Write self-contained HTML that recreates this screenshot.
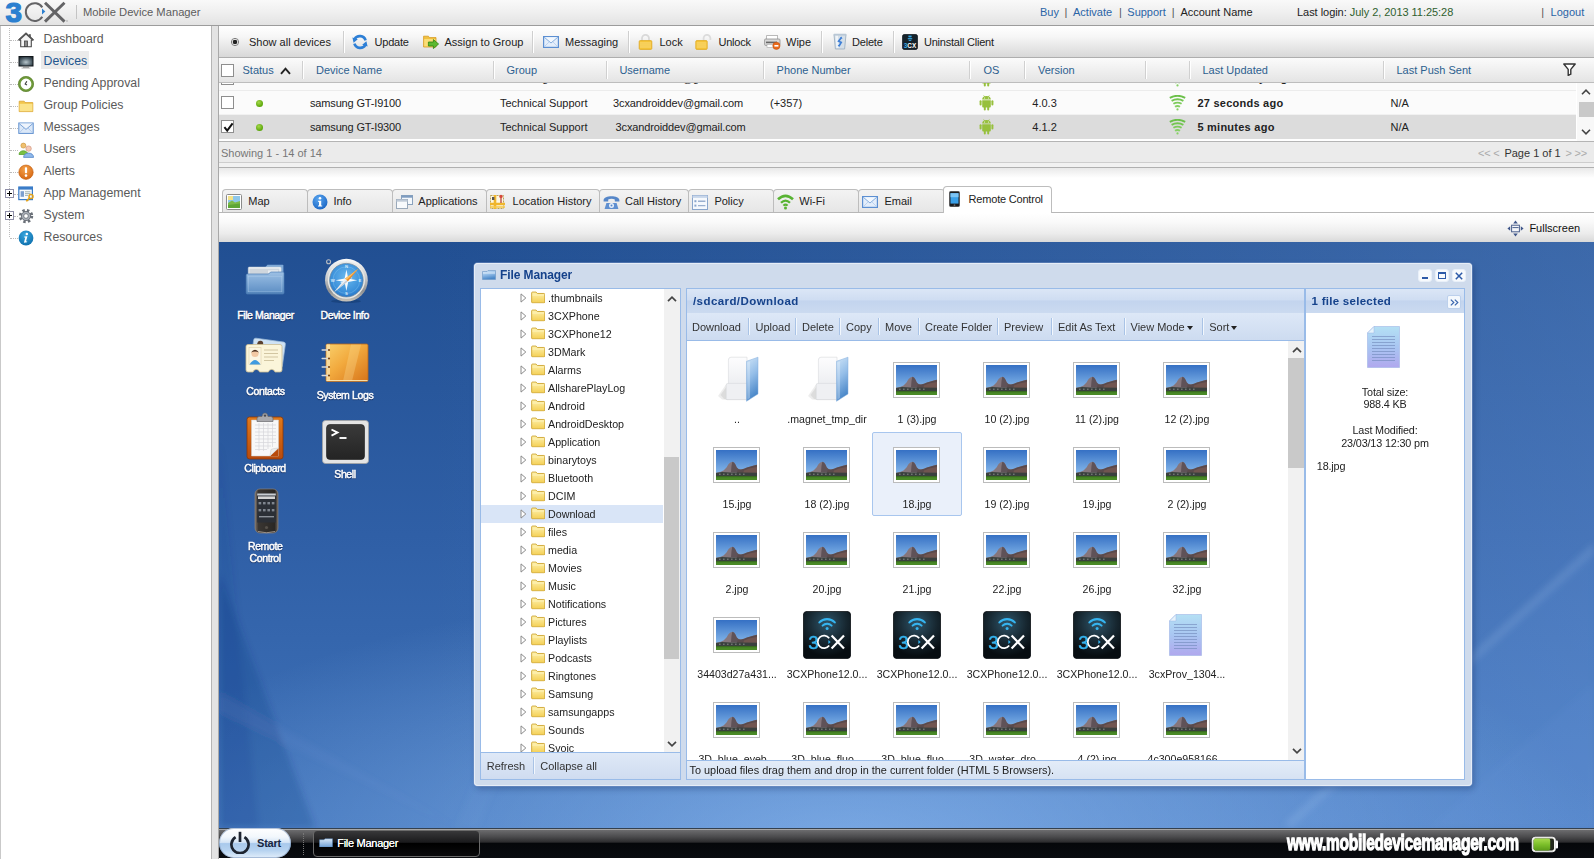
<!DOCTYPE html>
<html>
<head>
<meta charset="utf-8">
<title>3CX Mobile Device Manager</title>
<style>
*{box-sizing:border-box;margin:0;padding:0}
html,body{width:1594px;height:859px;overflow:hidden;background:#fff}
body{font-family:"Liberation Sans",sans-serif;font-size:11px;color:#222;position:relative}
.abs{position:absolute}
.t{position:absolute;white-space:nowrap;line-height:14px}
/* header */
#hdr{position:absolute;left:0;top:0;width:1594px;height:26px;background:linear-gradient(#f9f9f9,#efefef 50%,#e3e3e3);border-bottom:1px solid #9c9c9c}
#hdr .lnk{color:#2a64a6}
/* sidebar */
#side{position:absolute;left:0;top:26px;width:212px;height:833px;background:#fff;border-left:1px solid #c9c9c9;border-right:1px solid #b5b5b5}
#split{position:absolute;left:212px;top:26px;width:6px;height:833px;background:#e3e3e3}
.nav{position:absolute;left:42.5px;margin-top:-1px;font-size:12.3px;color:#5a5a5a;line-height:16px;white-space:nowrap}
.nico{position:absolute;left:17px;width:18px;height:18px}
/* main */
#main{position:absolute;left:218px;top:26px;width:1376px;height:833px;border-left:1px solid #a9a9a9}
#tb{position:absolute;left:0;top:0px;width:1375px;height:32px;background:linear-gradient(#ffffff 0%,#f6f6f6 35%,#e6e6e6 70%,#d8d8d8 100%);border-bottom:1px solid #aeaeae}
#tb .t{top:9px;font-size:11px;color:#222;letter-spacing:0}
.sep{position:absolute;top:5px;width:1px;height:22px;background:#cfcfcf;border-right:1px solid #fff;box-sizing:content-box}
#gh{position:absolute;left:0;top:32px;width:1375px;height:25px;background:linear-gradient(#fbfbfb,#e4e4e4);border-bottom:1px solid #bdbdbd}
#gh .t{top:5px;color:#2d5f8f;font-size:11px;letter-spacing:0}
#gh .cs{position:absolute;top:3px;width:1px;height:18px;background:#d0d0d0;border-right:1px solid #fff;box-sizing:content-box}
.row{position:absolute;left:0;width:1357px;font-size:11px}
.row .t{top:5px;letter-spacing:0;color:#222}
.cb{position:absolute;width:13px;height:13px;background:#fff;border:1px solid #8e8e8e}
.dot{position:absolute;width:7px;height:7px;border-radius:50%;background:radial-gradient(circle at 40% 35%,#a5d84a,#5aa60a 70%)}
/* tabs */
.tab{position:absolute;top:163px;height:23px;border:1px solid #bdbdbd;border-bottom:none;border-radius:4px 4px 0 0;background:linear-gradient(#f3f3f3,#e6e6e6)}
.tab .t{top:4px;font-size:11px;color:#222;letter-spacing:0}
.tab.act{top:159.6px;height:27.4px;background:#fff;z-index:3}
.tab.act .t{top:5px;letter-spacing:-.2px}
/* desktop */
#desk{position:absolute;left:0px;top:216px;width:1375px;height:586px;overflow:hidden;background:linear-gradient(180deg,#2b5aa3 0%,#3466ae 25%,#416fb5 50%,#4a7cc2 75%,#5a8fd4 100%)}
#task{position:absolute;left:0;top:802px;width:1375px;height:30px;background:linear-gradient(#777779 0%,#6a6a6c 8%,#4a4a4c 30%,#2c2c2e 47%,#05070a 51%,#0a0c10 100%)}
.dlab{position:absolute;color:#fff;-webkit-text-stroke:.45px #fff;font-size:10.5px;text-align:center;line-height:12px;text-shadow:0 1px 1px rgba(0,0,30,.7);letter-spacing:-.38px;white-space:nowrap}
</style>
</head>
<body>
<div id="hdr">
 <!-- logo -->
 <svg class="abs" style="left:0px;top:0px" width="72" height="25" viewBox="0 0 72 25">
  <text x="5.6" y="21.8" font-family="Liberation Sans" font-weight="bold" font-size="27.5" fill="#2b7fd0" stroke="#2b7fd0" stroke-width="1.1" textLength="16.5" lengthAdjust="spacingAndGlyphs">3</text>
  <path d="M42.3 7.4 A8.9 8.9 0 1 0 42.3 16.8" fill="none" stroke="#646466" stroke-width="2"/>
  <path d="M42 8.4 L45.3 11.4 L42 14.4 Z" fill="#2b7fd0"/>
  <path d="M45 2.8 L64.5 21.6 M64.5 2.8 L45 21.6" stroke="#646466" stroke-width="2.9" fill="none"/>
  <circle cx="67" cy="21" r="0.7" fill="#999"/>
 </svg>
 <div class="abs" style="left:76px;top:5px;width:1px;height:14px;background:#c4c4c4"></div>
 <div class="t" style="left:83px;top:5px;font-size:11.2px;color:#5c5c5c;">Mobile Device Manager</div>
 <div class="t lnk" style="left:1040px;top:5px">Buy</div><div class="t" style="left:1064.5px;top:5px;color:#555">|</div><div class="t lnk" style="left:1073px;top:5px">Activate</div><div class="t" style="left:1119px;top:5px;color:#555">|</div><div class="t lnk" style="left:1127.3px;top:5px">Support</div><div class="t" style="left:1171.8px;top:5px;color:#555">|</div><div class="t" style="left:1180.4px;top:5px;color:#222">Account Name</div>
 <div class="t" style="left:1297px;top:5px;font-size:11px;color:#222;letter-spacing:-.04px">Last login: <span style="color:#2f5f2f">July 2, 2013 11:25:28</span></div>
 <div class="t" style="left:1541.2px;top:5px;color:#555">|</div><div class="t lnk" style="left:1550.6px;top:5px">Logout</div>
</div>

<div id="side">
<div class="abs" style="left:8px;top:2px;width:0;height:209px;border-left:1px dotted #bcbcbc"></div>
<div class="abs" style="left:9px;top:14px;width:8px;height:0;border-top:1px dotted #bcbcbc"></div>
<div class="nico" style="left:17px;top:6px"><svg viewBox="0 0 16 16" width="16" height="16"><path d="M8 1.2 L15.3 8 L13.3 8 L13.3 14.8 L2.7 14.8 L2.7 8 L0.7 8 Z" fill="#f4f4f4" stroke="#4a4a4a" stroke-width="1.1" stroke-linejoin="round"/><path d="M0.9 8.2 L8 1.6 L15.1 8.2" fill="none" stroke="#555" stroke-width="1.6"/><rect x="11" y="2.2" width="1.8" height="3" fill="#555"/><rect x="6.5" y="9" width="3" height="5.6" fill="#8a8a8a" stroke="#444" stroke-width=".8"/></svg></div>
<div class="nav" style="top:6px">Dashboard</div>
<div class="abs" style="left:9px;top:36px;width:8px;height:0;border-top:1px dotted #bcbcbc"></div>
<div class="nico" style="left:17px;top:28px"><svg viewBox="0 0 16 16" width="16" height="16"><defs><radialGradient id="dv" cx=".5" cy=".6" r=".7"><stop offset="0" stop-color="#b8c6cc"/><stop offset=".6" stop-color="#4d5d66"/><stop offset="1" stop-color="#1a2228"/></radialGradient></defs><rect x="1" y="2.5" width="14" height="9.5" fill="url(#dv)" stroke="#11171b" stroke-width="1"/><rect x="5" y="12.5" width="6" height="1.2" fill="#777"/><rect x="3.5" y="13.6" width="9" height=".9" fill="#aaa"/></svg></div>
<div class="abs" style="left:40px;top:25px;width:48px;height:18px;background:#ebebeb"></div>
<div class="nav" style="top:28px;color:#24578f">Devices</div>
<div class="abs" style="left:9px;top:58px;width:8px;height:0;border-top:1px dotted #bcbcbc"></div>
<div class="nico" style="left:17px;top:50px"><svg viewBox="0 0 16 16" width="16" height="16"><circle cx="8" cy="8" r="6.6" fill="#fff" stroke="#6f9a3a" stroke-width="2.4"/><circle cx="8" cy="8" r="7.6" fill="none" stroke="#557a2a" stroke-width=".6"/><path d="M8.8 5.2 L7.2 8 L9 9" fill="none" stroke="#444" stroke-width="1.2"/></svg></div>
<div class="nav" style="top:50px">Pending Approval</div>
<div class="abs" style="left:9px;top:80px;width:8px;height:0;border-top:1px dotted #bcbcbc"></div>
<div class="nico" style="left:17px;top:72px"><svg viewBox="0 0 16 16" width="16" height="16"><path d="M1.2 3.2 L6.2 3.2 L7 4.6 L14.8 4.6 L14.8 13.6 L1.2 13.6 Z" fill="#f3c64c" stroke="#d9a32e" stroke-width=".8"/><rect x="1.6" y="5.8" width="12.8" height="7.4" fill="#fbe38a"/></svg></div>
<div class="nav" style="top:72px">Group Policies</div>
<div class="abs" style="left:9px;top:102px;width:8px;height:0;border-top:1px dotted #bcbcbc"></div>
<div class="nico" style="left:17px;top:94px"><svg viewBox="0 0 16 16" width="16" height="16"><rect x=".8" y="3" width="14.4" height="10.4" fill="#dbe8f8" stroke="#5f8fcf" stroke-width="1"/><path d="M1.2 3.6 L8 9.4 L14.8 3.6" fill="#eef4fc" stroke="#7aa3d8" stroke-width="1"/><path d="M1.2 13 L6 8 M14.8 13 L10 8" stroke="#a9c4e8" stroke-width=".8"/></svg></div>
<div class="nav" style="top:94px">Messages</div>
<div class="abs" style="left:9px;top:124px;width:8px;height:0;border-top:1px dotted #bcbcbc"></div>
<div class="nico" style="left:17px;top:116px"><svg viewBox="0 0 16 16" width="16" height="16"><circle cx="5.4" cy="3.6" r="2.5" fill="#f0c070" stroke="#c89030" stroke-width=".6"/><path d="M1 12.5 C1 7.5 9.8 7.5 9.8 12.5 Z" fill="#7bc043" stroke="#4e9a22" stroke-width=".7"/><circle cx="10.6" cy="6.6" r="2.7" fill="#f6c9b4" stroke="#c98a70" stroke-width=".6"/><path d="M5.6 15.4 C5.6 9.6 15.6 9.6 15.6 15.4 Z" fill="#8fb8ea" stroke="#4a7fc4" stroke-width=".7"/></svg></div>
<div class="nav" style="top:116px">Users</div>
<div class="abs" style="left:9px;top:146px;width:8px;height:0;border-top:1px dotted #bcbcbc"></div>
<div class="nico" style="left:17px;top:138px"><svg viewBox="0 0 16 16" width="16" height="16"><defs><radialGradient id="al" cx=".45" cy=".3" r=".8"><stop offset="0" stop-color="#f5a24a"/><stop offset="1" stop-color="#d2600c"/></radialGradient></defs><circle cx="8" cy="8.2" r="7.2" fill="url(#al)" stroke="#c05a0a" stroke-width=".6"/><rect x="6.9" y="3.2" width="2.2" height="6" rx=".8" fill="#fff"/><circle cx="8" cy="11.6" r="1.3" fill="#fff"/></svg></div>
<div class="nav" style="top:138px">Alerts</div>
<div class="abs" style="left:4px;top:163px;width:9px;height:9px;border:1px solid #8f8fa8;background:#fff"></div><div class="abs" style="left:6px;top:167px;width:5px;height:1px;background:#000"></div><div class="abs" style="left:8px;top:165px;width:1px;height:5px;background:#000"></div>
<div class="abs" style="left:13px;top:168px;width:4px;height:0;border-top:1px dotted #bcbcbc"></div>
<div class="nico" style="left:17px;top:160px"><svg viewBox="0 0 16 16" width="16" height="16"><rect x=".8" y="1" width="13.6" height="12.6" fill="#f7fafd" stroke="#3a7cc8" stroke-width="1.2"/><rect x=".8" y="1" width="13.6" height="2.6" fill="#3a7cc8"/><rect x="2.6" y="5.2" width="3.4" height="5.6" fill="#7c9fd0"/><path d="M7 5.8 H12.4 M7 7.6 H12.4 M7 9.4 H10" stroke="#9aa" stroke-width=".9"/><circle cx="13" cy="10.4" r="2" fill="none" stroke="#e3a21a" stroke-width="1.5"/><path d="M11.6 11.8 L8.2 15.2 M9.3 14 L10.3 15" stroke="#e3a21a" stroke-width="1.5"/></svg></div>
<div class="nav" style="top:160px">App Management</div>
<div class="abs" style="left:4px;top:185px;width:9px;height:9px;border:1px solid #8f8fa8;background:#fff"></div><div class="abs" style="left:6px;top:189px;width:5px;height:1px;background:#000"></div><div class="abs" style="left:8px;top:187px;width:1px;height:5px;background:#000"></div>
<div class="abs" style="left:13px;top:190px;width:4px;height:0;border-top:1px dotted #bcbcbc"></div>
<div class="nico" style="left:17px;top:182px"><svg viewBox="0 0 16 16" width="16" height="16"><g fill="none" stroke="#6a7078" stroke-width="2.8" stroke-dasharray="2.4 2.2"><circle cx="8" cy="8" r="5.8"/></g><circle cx="8" cy="8" r="4.6" fill="#aab0b8" stroke="#5a6068" stroke-width=".8"/><circle cx="8" cy="8" r="2.3" fill="#fff" stroke="#5a6068" stroke-width=".7"/></svg></div>
<div class="nav" style="top:182px">System</div>
<div class="abs" style="left:9px;top:212px;width:8px;height:0;border-top:1px dotted #bcbcbc"></div>
<div class="nico" style="left:17px;top:204px"><svg viewBox="0 0 16 16" width="16" height="16"><defs><radialGradient id="rs" cx=".45" cy=".3" r=".8"><stop offset="0" stop-color="#37a6de"/><stop offset="1" stop-color="#0a6aa8"/></radialGradient></defs><circle cx="8" cy="8" r="7.4" fill="url(#rs)"/><circle cx="8.8" cy="4" r="1.25" fill="#fff"/><path d="M6.3 6.6 L9.4 6.2 L8 11.6 L9.2 11.3 L9 12.2 L5.9 12.8 L7.3 7.4 L6.2 7.5 Z" fill="#fff"/></svg></div>
<div class="nav" style="top:204px">Resources</div>
</div>
<div id="split"></div>
<div id="main">
<div id="tb">
<div class="abs" style="left:11px;top:11px;line-height:0"><svg width="10" height="10" viewBox="0 0 10 10"><circle cx="5" cy="5" r="3.6" fill="#fff" stroke="#777" stroke-width="1"/><circle cx="5" cy="5" r="2.3" fill="#222"/></svg></div>
<div class="t" style="left:30px;">Show all devices</div>
<div class="sep" style="left:124px"></div>
<div class="abs" style="left:133px;top:8px;line-height:0"><svg width="16" height="16" viewBox="0 0 16 16"><path d="M13.6 6.4 A6 6 0 0 0 2.6 5.2" fill="none" stroke="#2d7fd6" stroke-width="2.6"/><path d="M0.4 3.6 L5.8 5.2 L1.6 8.8 Z" fill="#2d7fd6"/><path d="M2.4 9.6 A6 6 0 0 0 13.4 10.8" fill="none" stroke="#2d7fd6" stroke-width="2.6"/><path d="M15.6 12.4 L10.2 10.8 L14.4 7.2 Z" fill="#2d7fd6"/></svg></div>
<div class="t" style="left:155.5px;;letter-spacing:-0.2px">Update</div>
<div class="abs" style="left:204px;top:8px;line-height:0"><svg width="16" height="16" viewBox="0 0 16 16"><path d="M.6 2.2 L5.4 2.2 L6.4 3.6 L13 3.6 L13 13 L.6 13 Z" fill="#f2c140" stroke="#d49a22" stroke-width=".8"/><rect x="1.2" y="5" width="11.2" height="7.4" fill="#fadd77"/><path d="M5.4 8 L10.4 8 L10.4 5.6 L15.6 10 L10.4 14.6 L10.4 12 L5.4 12 Z" fill="#5cb830" stroke="#2f8412" stroke-width=".8"/></svg></div>
<div class="t" style="left:225.5px;">Assign to Group</div>
<div class="sep" style="left:313px"></div>
<div class="abs" style="left:324px;top:10px;line-height:0"><svg width="16" height="12" viewBox="0 0 16 12"><rect x=".6" y=".6" width="14.8" height="10.8" fill="#e4eefb" stroke="#5c8fd2" stroke-width="1.2"/><path d="M1.2 1.2 L8 7 L14.8 1.2" fill="#f3f8fe" stroke="#86aede" stroke-width="1"/><path d="M1.2 10.8 L6 6 M14.8 10.8 L10 6" stroke="#b4cdee" stroke-width=".8"/></svg></div>
<div class="t" style="left:346px;">Messaging</div>
<div class="sep" style="left:409px"></div>
<div class="abs" style="left:419px;top:8px;line-height:0"><svg width="15" height="16" viewBox="0 0 15 16"><path d="M4 7 V4.4 A3.5 3.5 0 0 1 11 4.4 V7" fill="none" stroke="#d9d9d9" stroke-width="1.8"/><rect x="1.2" y="6.6" width="12.6" height="8.8" rx="1" fill="#f6c53a" stroke="#e0a820" stroke-width=".8"/><path d="M2 9 H13 M2 11 H13 M2 13 H13" stroke="#fbe08a" stroke-width=".8"/></svg></div>
<div class="t" style="left:440.5px;">Lock</div>
<div class="abs" style="left:476px;top:8px;line-height:0"><svg width="17" height="16" viewBox="0 0 17 16"><path d="M8.6 7 V4.2 A3.4 3.4 0 0 1 15.4 4.2 V6" fill="none" stroke="#dcdcdc" stroke-width="1.8"/><rect x=".8" y="6.6" width="11.4" height="8.8" rx="1" fill="#f6c53a" stroke="#e0a820" stroke-width=".8"/><path d="M1.6 9 H11.4 M1.6 11 H11.4 M1.6 13 H11.4" stroke="#fbe08a" stroke-width=".8"/></svg></div>
<div class="t" style="left:499.4px;;letter-spacing:-0.2px">Unlock</div>
<div class="abs" style="left:545px;top:8px;line-height:0"><svg width="17" height="16" viewBox="0 0 17 16"><rect x="2.6" y="1.6" width="11" height="4" fill="#fff" stroke="#aaa" stroke-width=".8"/><rect x=".6" y="5" width="15.4" height="6.4" rx="1" fill="#d8d8d8" stroke="#8f8f8f" stroke-width=".8"/><rect x="2" y="7.6" width="11" height="1.6" fill="#666"/><rect x="3" y="10.4" width="9" height="3" fill="#fff" stroke="#aaa" stroke-width=".6"/><circle cx="12.4" cy="11.8" r="3.6" fill="#ea6a1c" stroke="#c4500c" stroke-width=".6"/><rect x="10.4" y="11" width="4" height="1.6" fill="#fff"/></svg></div>
<div class="t" style="left:567px;">Wipe</div>
<div class="sep" style="left:602px"></div>
<div class="abs" style="left:613px;top:7px;line-height:0"><svg width="16" height="17" viewBox="0 0 16 17"><path d="M2 1.6 H14 L12.6 16 H3.4 Z" fill="#d5dfe8" stroke="#9fb1c2" stroke-width=".9"/><path d="M3.4 2.4 H6 L6.6 15 H4.4 Z" fill="#f2f6fa" opacity=".9"/><rect x="1.6" y=".8" width="12.8" height="1.8" rx=".6" fill="#b9c8d6"/><path d="M9.4 4.6 L6.6 8.2 L9.2 9.4 L7 13" fill="none" stroke="#3f7fd6" stroke-width="1.7"/><path d="M10.6 5.4 L9.2 3.6 L8 5.6 Z M5.6 12.2 L7.2 14 L8.2 11.8 Z" fill="#3f7fd6"/></svg></div>
<div class="t" style="left:633px;;letter-spacing:-0.2px">Delete</div>
<div class="sep" style="left:674px"></div>
<div class="abs" style="left:683px;top:8px;line-height:0"><svg width="16" height="16" viewBox="0 0 16 16"><rect x=".3" y=".3" width="15.4" height="15.4" rx="2.6" fill="#15222b" stroke="#0a1218" stroke-width=".6"/><path d="M5.8 5.2 A3.4 3.4 0 0 1 10.2 5.2 M6.8 6.6 A1.8 1.8 0 0 1 9.2 6.6" fill="none" stroke="#35a9e6" stroke-width="1.1"/><circle cx="8" cy="3" r=".01" fill="none"/><text x="8" y="13.6" text-anchor="middle" font-family="Liberation Sans" font-size="6.4" font-weight="bold" fill="#fff"><tspan fill="#35a9e6">3</tspan>CX</text><rect x="6.4" y="1.6" width="3.2" height="1.6" fill="#35a9e6"/></svg></div>
<div class="t" style="left:705px;;letter-spacing:-0.22px">Uninstall Client</div>
</div>
<div id="gh">
<div class="cb" style="left:2px;top:6px"></div>
<div class="t" style="left:23.5px;">Status</div>
<div class="t" style="left:97px;">Device Name</div>
<div class="t" style="left:287.5px;">Group</div>
<div class="t" style="left:400.4px;">Username</div>
<div class="t" style="left:557.6px;">Phone Number</div>
<div class="t" style="left:764.4px;">OS</div>
<div class="t" style="left:819px;">Version</div>
<div class="t" style="left:983.5px;">Last Updated</div>
<div class="t" style="left:1177.5px;">Last Push Sent</div>
<svg class="abs" style="left:60.5px;top:9px" width="11" height="8" viewBox="0 0 11 8"><path d="M1 6.8 L5.5 1.6 L10 6.8" fill="none" stroke="#222" stroke-width="1.9"/></svg>
<div class="cs" style="left:83px"></div>
<div class="cs" style="left:273.5px"></div>
<div class="cs" style="left:387px"></div>
<div class="cs" style="left:544px"></div>
<div class="cs" style="left:750px"></div>
<div class="cs" style="left:805px"></div>
<div class="cs" style="left:925.5px"></div>
<div class="cs" style="left:969.5px"></div>
<div class="cs" style="left:1163.5px"></div>
<div class="abs" style="left:1343.5px;top:5px;line-height:0"><svg width="13" height="13" viewBox="0 0 13 13"><path d="M.8 1 H12.2 L7.8 6.4 V11.2 L5.2 12.4 V6.4 Z" fill="#fff" stroke="#333" stroke-width="1.4" stroke-linejoin="round"/></svg></div>
</div>
<div class="abs" style="left:0;top:57px;width:1375px;height:58px;background:#fff;overflow:hidden">
<div class="row" style="top:0;height:8px;background:#fafafa;border-bottom:1px solid #ececec;overflow:hidden">
<div class="cb" style="left:2px;top:-11px"></div>
<div class="t" style="left:91px;top:-13px">HTC Desire HD</div><div class="t" style="left:281px;top:-12px">Marketing</div><div class="t" style="left:394px;top:-12px;margin-left:9px">3cxandroid2@gmail.com</div><div class="t" style="left:978px;top:-12px;font-weight:bold;margin-left:40px">2 days ago</div>
<div class="abs" style="left:760px;top:-12px;line-height:0"><svg width="15" height="16" viewBox="0 0 15 16"><g fill="#97c03d"><path d="M3.2 5.2 H11.8 V11.6 A1 1 0 0 1 10.8 12.6 H4.2 A1 1 0 0 1 3.2 11.6 Z"/><path d="M3.2 4.6 A4.3 3.7 0 0 1 11.8 4.6 Z"/><rect x=".6" y="5.2" width="2" height="5.4" rx="1"/><rect x="12.4" y="5.2" width="2" height="5.4" rx="1"/><rect x="4.8" y="11" width="2" height="4.6" rx="1"/><rect x="8.2" y="11" width="2" height="4.6" rx="1"/><path d="M4.6 .4 L5.8 2 M10.4 .4 L9.2 2" stroke="#97c03d" stroke-width=".7"/></g><circle cx="5.6" cy="3" r=".55" fill="#fff"/><circle cx="9.4" cy="3" r=".55" fill="#fff"/></svg></div><div class="abs" style="left:949.5px;top:-12.5px;line-height:0"><svg width="17" height="16" viewBox="0 0 17 16"><g fill="none" stroke-linecap="butt"><path d="M.8 2.8 Q8.5 -1.2 16.2 2.8" stroke="#6cc04a" stroke-width="1.9"/><path d="M2.6 5.8 Q8.5 2.6 14.4 5.8" stroke="#74c652" stroke-width="1.9"/><path d="M4.4 8.8 Q8.5 6.4 12.6 8.8" stroke="#7dcb5b" stroke-width="1.9"/><path d="M6 11.8 Q8.5 10.2 11 11.8" stroke="#86d064" stroke-width="1.9"/></g><circle cx="8.5" cy="14.4" r="1.1" fill="#86d064"/></svg></div>
</div>
<div class="row" style="top:8px;height:24px;background:#fbfbfb;border-bottom:1px solid #f1f1f1"><div class="cb" style="left:2px;top:5px"></div><div class="dot" style="left:36.5px;top:8.5px"></div><div class="t" style="left:91px;;letter-spacing:-0.16px">samsung GT-I9100</div><div class="t" style="left:281px;">Technical Support</div><div class="t" style="left:394px;;letter-spacing:-0.12px">3cxandroiddev@gmail.com</div><div class="t" style="left:551px;">(+357)</div><div class="abs" style="left:760px;top:4px;line-height:0"><svg width="15" height="16" viewBox="0 0 15 16"><g fill="#97c03d"><path d="M3.2 5.2 H11.8 V11.6 A1 1 0 0 1 10.8 12.6 H4.2 A1 1 0 0 1 3.2 11.6 Z"/><path d="M3.2 4.6 A4.3 3.7 0 0 1 11.8 4.6 Z"/><rect x=".6" y="5.2" width="2" height="5.4" rx="1"/><rect x="12.4" y="5.2" width="2" height="5.4" rx="1"/><rect x="4.8" y="11" width="2" height="4.6" rx="1"/><rect x="8.2" y="11" width="2" height="4.6" rx="1"/><path d="M4.6 .4 L5.8 2 M10.4 .4 L9.2 2" stroke="#97c03d" stroke-width=".7"/></g><circle cx="5.6" cy="3" r=".55" fill="#fff"/><circle cx="9.4" cy="3" r=".55" fill="#fff"/></svg></div><div class="t" style="left:813.3px;">4.0.3</div><div class="abs" style="left:949.5px;top:4px;line-height:0"><svg width="17" height="16" viewBox="0 0 17 16"><g fill="none" stroke-linecap="butt"><path d="M.8 2.8 Q8.5 -1.2 16.2 2.8" stroke="#6cc04a" stroke-width="1.9"/><path d="M2.6 5.8 Q8.5 2.6 14.4 5.8" stroke="#74c652" stroke-width="1.9"/><path d="M4.4 8.8 Q8.5 6.4 12.6 8.8" stroke="#7dcb5b" stroke-width="1.9"/><path d="M6 11.8 Q8.5 10.2 11 11.8" stroke="#86d064" stroke-width="1.9"/></g><circle cx="8.5" cy="14.4" r="1.1" fill="#86d064"/></svg></div><div class="t" style="left:978.4px;font-weight:bold;letter-spacing:.25px">27 seconds ago</div><div class="t" style="left:1171.5px;">N/A</div></div>

<div class="row" style="top:32px;height:24px;background:#dcdcdc"><div class="cb" style="left:2px;top:5px"></div><svg class="abs" style="left:3.5px;top:6.5px" width="11" height="11" viewBox="0 0 11 11"><path d="M1.4 5.2 L4.2 8.6 L9.6 1.4" fill="none" stroke="#111" stroke-width="2"/></svg><div class="dot" style="left:36.5px;top:8.5px"></div><div class="t" style="left:91px;;letter-spacing:-0.16px">samsung GT-I9300</div><div class="t" style="left:281px;">Technical Support</div><div class="t" style="left:396.5px;;letter-spacing:-0.12px">3cxandroiddev@gmail.com</div><div class="abs" style="left:760px;top:4px;line-height:0"><svg width="15" height="16" viewBox="0 0 15 16"><g fill="#97c03d"><path d="M3.2 5.2 H11.8 V11.6 A1 1 0 0 1 10.8 12.6 H4.2 A1 1 0 0 1 3.2 11.6 Z"/><path d="M3.2 4.6 A4.3 3.7 0 0 1 11.8 4.6 Z"/><rect x=".6" y="5.2" width="2" height="5.4" rx="1"/><rect x="12.4" y="5.2" width="2" height="5.4" rx="1"/><rect x="4.8" y="11" width="2" height="4.6" rx="1"/><rect x="8.2" y="11" width="2" height="4.6" rx="1"/><path d="M4.6 .4 L5.8 2 M10.4 .4 L9.2 2" stroke="#97c03d" stroke-width=".7"/></g><circle cx="5.6" cy="3" r=".55" fill="#fff"/><circle cx="9.4" cy="3" r=".55" fill="#fff"/></svg></div><div class="t" style="left:813.3px;">4.1.2</div><div class="abs" style="left:949.5px;top:4px;line-height:0"><svg width="17" height="16" viewBox="0 0 17 16"><g fill="none" stroke-linecap="butt"><path d="M.8 2.8 Q8.5 -1.2 16.2 2.8" stroke="#6cc04a" stroke-width="1.9"/><path d="M2.6 5.8 Q8.5 2.6 14.4 5.8" stroke="#74c652" stroke-width="1.9"/><path d="M4.4 8.8 Q8.5 6.4 12.6 8.8" stroke="#7dcb5b" stroke-width="1.9"/><path d="M6 11.8 Q8.5 10.2 11 11.8" stroke="#86d064" stroke-width="1.9"/></g><circle cx="8.5" cy="14.4" r="1.1" fill="#86d064"/></svg></div><div class="t" style="left:978.4px;font-weight:bold;letter-spacing:.25px">5 minutes ago</div><div class="t" style="left:1171.5px;">N/A</div></div>
<div class="abs" style="left:1358px;top:0;width:17px;height:58px;background:#f8f8f8"></div>
<div class="abs" style="left:1360px;top:19px;width:15px;height:15px;background:#c9c9c9"></div>
<svg class="abs" style="left:1361.5px;top:6px" width="10" height="6" viewBox="0 0 10 6"><path d="M1 5.2 L5 1.2 L9 5.2" fill="none" stroke="#444" stroke-width="1.6"/></svg>
<svg class="abs" style="left:1361.5px;top:46px" width="10" height="6" viewBox="0 0 10 6"><path d="M1 .8 L5 4.8 L9 .8" fill="none" stroke="#444" stroke-width="1.6"/></svg>
</div>
<div class="abs" style="left:0;top:115px;width:1375px;height:22px;background:#ebebeb;border-top:1px solid #b4b4b4;border-bottom:1px solid #cdcdcd">
<div class="t" style="left:2px;top:4px;color:#777;font-size:11px">Showing 1 - 14 of 14</div>
<div class="t" style="left:1259px;top:4px;color:#aaa;font-size:11px;letter-spacing:-.2px">&lt;&lt; &lt;&nbsp;&thinsp;<span style="color:#333;letter-spacing:0">Page 1 of 1</span>&nbsp;&thinsp;&gt; &gt;&gt;</div>
</div>
<div class="abs" style="left:0;top:137px;width:1375px;height:4px;background:#f1f1f1"></div>
<div class="abs" style="left:0;top:141px;width:1375px;height:1px;background:#b0b0b0"></div>
<div class="abs" style="left:0;top:142px;width:1375px;height:10px;background:linear-gradient(#e9e9e9,#fff)"></div>
<div class="abs" style="left:0;top:152px;width:1375px;height:35px;background:#fff"></div>
<div class="abs" style="left:0;top:186px;width:1375px;height:1px;background:#b7b7b7"></div>
<div class="tab" style="left:3px;width:86px"><div class="abs" style="left:3px;top:4px;line-height:0"><svg width="16" height="16" viewBox="0 0 16 16"><rect x=".5" y=".5" width="15" height="15" rx="1" fill="#fff" stroke="#8a8a8a"/><rect x="2" y="2" width="12" height="12" fill="#8ec7ea"/><path d="M2 9 L6 6.5 L9 8.5 L14 7 V14 H2 Z" fill="#7cba48"/><rect x="2" y="2" width="5" height="4" fill="#f3e28a"/><path d="M2 11 L14 9.6 V14 H2 Z" fill="#5ea636"/></svg></div><div class="t" style="left:25.3px">Map</div></div>
<div class="tab" style="left:88px;width:86px"><div class="abs" style="left:4.3px;top:4px;line-height:0"><svg width="16" height="16" viewBox="0 0 16 16"><defs><radialGradient id="ig" cx=".4" cy=".3" r=".8"><stop offset="0" stop-color="#5aa6f0"/><stop offset="1" stop-color="#1560c0"/></radialGradient></defs><circle cx="8" cy="8" r="7.5" fill="url(#ig)"/><circle cx="8" cy="4.2" r="1.3" fill="#fff"/><path d="M6.2 6.8 H9.2 V11.4 H10.2 V12.6 H6 V11.4 H7 V8 H6.2 Z" fill="#fff"/></svg></div><div class="t" style="left:25.4px">Info</div></div>
<div class="tab" style="left:173px;width:95px"><div class="abs" style="left:3px;top:4px;line-height:0"><svg width="17" height="16" viewBox="0 0 17 16"><rect x="5.5" y="1.5" width="11" height="9" fill="#f4f8fc" stroke="#8aa2bd"/><rect x="5.5" y="1.5" width="11" height="2.2" fill="#7e9cc0"/><rect x=".5" y="5.5" width="11" height="9" fill="#f8fafc" stroke="#9aa9ba"/><rect x=".5" y="5.5" width="11" height="2.2" fill="#c0cbd8"/></svg></div><div class="t" style="left:25.3px">Applications</div></div>
<div class="tab" style="left:267px;width:114px"><div class="abs" style="left:2.4px;top:4px;line-height:0"><svg width="17" height="16" viewBox="0 0 17 16"><rect x="1.5" y="1.5" width="13" height="13" fill="#fdf7e2" stroke="#b9a25a" stroke-dasharray="2 1"/><path d="M1 10 H16 M6 1 V15" stroke="#f0b62c" stroke-width="2.6"/><path d="M1 13 H16" stroke="#f5c84e" stroke-width="1.6"/><path d="M12 1.4 V9" stroke="#b5342a" stroke-width="1.2"/><circle cx="12" cy="2.4" r="1.7" fill="#d6483a"/><rect x="3" y="3" width="2.4" height="3" fill="#555"/></svg></div><div class="t" style="left:25.6px">Location History</div></div>
<div class="tab" style="left:380px;width:90px"><div class="abs" style="left:2.7px;top:4px;line-height:0"><svg width="17" height="16" viewBox="0 0 17 16"><path d="M.6 6.4 C.6 1 16.4 1 16.4 6.4 V7.6 H11.8 V5.4 C10 4.6 7 4.6 5.2 5.4 V7.6 H.6 Z" fill="#5586c8"/><path d="M3.4 9 H13.6 L15.4 15 H1.6 Z" fill="#5f8fd0"/><circle cx="8.5" cy="11.6" r="2.5" fill="#e8f0fa"/><circle cx="8.5" cy="11.6" r="1" fill="#5586c8"/></svg></div><div class="t" style="left:25px">Call History</div></div>
<div class="tab" style="left:469px;width:86px"><div class="abs" style="left:3px;top:5px;line-height:0"><svg width="16" height="15" viewBox="0 0 16 15"><rect x=".5" y=".5" width="15" height="14" fill="#f6f9fd" stroke="#8aa6cc"/><rect x=".5" y=".5" width="15" height="2.4" fill="#c8d6ea"/><rect x="2.4" y="5.2" width="2" height="2" fill="#8aa6cc"/><rect x="2.4" y="9.6" width="2" height="2" fill="#8aa6cc"/><path d="M6 6.2 H13.4 M6 10.6 H13.4" stroke="#9ab0cf" stroke-width="1.4"/></svg></div><div class="t" style="left:25.4px">Policy</div></div>
<div class="tab" style="left:554px;width:86px"><div class="abs" style="left:3px;top:4px;line-height:0"><svg width="17" height="16" viewBox="0 0 17 16"><g fill="none" stroke="#58b332"><path d="M1 5.2 Q8.5 -1.6 16 5.2" stroke-width="2.6"/><path d="M4 8.8 Q8.5 4.4 13 8.8" stroke-width="2.3"/></g><path d="M6.4 11.6 Q8.5 9.6 10.6 11.6" fill="none" stroke="#58b332" stroke-width="2"/><circle cx="8.5" cy="14" r="1.5" fill="#58b332"/></svg></div><div class="t" style="left:25.3px">Wi-Fi</div></div>
<div class="tab" style="left:639px;width:86.7px"><div class="abs" style="left:3px;top:6px;line-height:0"><svg width="16" height="12" viewBox="0 0 16 12"><rect x=".6" y=".6" width="14.8" height="10.8" fill="#e4eefb" stroke="#5c8fd2" stroke-width="1.2"/><path d="M1.2 1.2 L8 7 L14.8 1.2" fill="#f3f8fe" stroke="#86aede" stroke-width="1"/><path d="M1.2 10.8 L6 6 M14.8 10.8 L10 6" stroke="#b4cdee" stroke-width=".8"/></svg></div><div class="t" style="left:25.4px">Email</div></div>
<div class="tab act" style="left:723.6px;width:109.2px"><div class="abs" style="left:5.5px;top:4.5px;line-height:0"><svg width="11" height="16" viewBox="0 0 11 16"><rect x=".3" y=".3" width="10.4" height="15.4" rx="1.6" fill="#1c1c1e" stroke="#555" stroke-width=".6"/><rect x="1.5" y="2.2" width="8" height="10.4" fill="#3aa0e8"/><rect x="1.5" y="2.2" width="8" height="4" fill="#7cc4f4"/><circle cx="5.5" cy="14.2" r=".9" fill="#666"/></svg></div><div class="t" style="left:25px">Remote Control</div></div>
<div class="abs" style="left:0;top:187px;width:1375px;height:29px;background:linear-gradient(#ffffff 0%,#fafafa 30%,#ececec 70%,#d9d9d9 100%)">
<svg class="abs" style="left:1288px;top:7px" width="17" height="17" viewBox="0 0 17 17"><rect x="4.6" y="5.2" width="7.8" height="6.6" fill="#f4f6fa" stroke="#4a5f8c" stroke-width="1"/><path d="M5.4 7.6 H11.6" stroke="#4a5f8c" stroke-width="1"/><path d="M8.5 .6 L10.8 3.6 H6.2 Z M8.5 16.4 L10.8 13.4 H6.2 Z M.4 8.5 L3.2 6.2 V10.8 Z M16.6 8.5 L13.8 6.2 V10.8 Z" fill="#3e568a"/></svg>
<div class="t" style="left:1310.4px;top:8px;font-size:11px;color:#111">Fullscreen</div>
</div>
<div id="desk"><svg class="abs" style="left:0;top:0" width="1375" height="586" viewBox="0 0 1375 586">
<defs>
<filter id="blr" x="-5%" y="-5%" width="110%" height="110%"><feGaussianBlur stdDeviation="3"/></filter>
<linearGradient id="bgA" x1="0" y1="0" x2="0" y2="1"><stop offset="0" stop-color="#214f92"/><stop offset=".5" stop-color="#2f5fa6"/><stop offset="1" stop-color="#4073ba"/></linearGradient>
<linearGradient id="bgB" x1="0" y1="0" x2="1" y2="0"><stop offset="0" stop-color="#9cc4ff" stop-opacity="0"/><stop offset=".15" stop-color="#9cc4ff" stop-opacity="0"/><stop offset="1" stop-color="#9cc4ff" stop-opacity=".22"/></linearGradient>
<radialGradient id="bgC" cx="0" cy="0" r="1" gradientUnits="userSpaceOnUse" gradientTransform="translate(631 600) scale(760 260)"><stop offset="0" stop-color="#a0ccff" stop-opacity=".56"/><stop offset=".5" stop-color="#a0ccff" stop-opacity=".29"/><stop offset="1" stop-color="#a0ccff" stop-opacity="0"/></radialGradient>
</defs>
<rect width="1375" height="586" fill="url(#bgA)"/>
<rect width="1375" height="586" fill="url(#bgB)"/>
<rect width="1375" height="586" fill="url(#bgC)"/>
<g filter="url(#blr)">
<path d="M1375 302 L1062 586 L1375 586 Z" fill="#8fbcf6" opacity=".05"/>
<path d="M1375 300 L1066 580 L1072 586 L1375 312 Z" fill="#c4ddfa" opacity=".12"/>
<path d="M1375 440 L1210 586 L1375 586 Z" fill="#8fbcf6" opacity=".04"/>
<path d="M0 330 L0 586 L96 586 Z" fill="#12357c" opacity=".22"/>
<path d="M0 200 L0 586 L40 586 Z" fill="#12357c" opacity=".10"/>
<path d="M240 586 L0 450 L0 470 Z" fill="#a8ccf6" opacity=".05"/>
<path d="M236 586 L400 180 L420 180 L260 586 Z" fill="#a8ccf6" opacity=".04"/>
</g>
</svg><svg class="abs" style="left:25px;top:20px" width="42" height="34" viewBox="0 0 42 34">
<defs><linearGradient id="ff" x1="0" y1="0" x2="0" y2="1"><stop offset="0" stop-color="#9dc0e4"/><stop offset=".5" stop-color="#7ba6d4"/><stop offset="1" stop-color="#5b8cc2"/></linearGradient></defs>
<path d="M21.5 5 L23.5 2.7 H38.6 Q39.4 2.7 39.4 3.6 V14 H21.5 Z" fill="#7fa9d6"/>
<rect x="4.2" y="5" width="33" height="9" rx="1" fill="#eef2f5" stroke="#b9c5d0" stroke-width=".5"/>
<rect x="5.4" y="6.6" width="30" height="6" fill="#cfd6dd"/>
<rect x="24" y="8.4" width="10" height="2.6" fill="#e9edf1"/>
<path d="M2.2 13.2 Q2.2 12 3.4 12 H24.6 L26.6 10 H38.8 Q40 10 40 11.2 V30.8 Q40 32 38.8 32 H3.4 Q2.2 32 2.2 30.8 Z" fill="url(#ff)" stroke="#4f7fb6" stroke-width=".7"/>
<rect x="4.4" y="14.2" width="33.4" height="15.6" fill="none" stroke="#c2daf2" stroke-width=".5" opacity=".55"/>
<path d="M2.6 31 H39.6" stroke="#3e6ca4" stroke-width=".8" opacity=".6"/>
</svg>
<svg class="abs" style="left:104px;top:14px" width="46" height="48" viewBox="0 0 46 48">
<defs><radialGradient id="cmp" cx=".5" cy=".4" r=".65"><stop offset="0" stop-color="#6ab8ee"/><stop offset=".7" stop-color="#3b90da"/><stop offset="1" stop-color="#2470c2"/></radialGradient>
<linearGradient id="rim" x1="0" y1="0" x2="0" y2="1"><stop offset="0" stop-color="#fbfbfb"/><stop offset=".45" stop-color="#c8cacc"/><stop offset=".75" stop-color="#8f9092"/><stop offset="1" stop-color="#c9c4ba"/></linearGradient></defs>
<ellipse cx="23" cy="45.2" rx="15" ry="1.8" fill="#0a2a5a" opacity=".35"/>
<circle cx="5.6" cy="5.8" r="2" fill="none" stroke="#b9bcc2" stroke-width="1.1"/>
<circle cx="23.4" cy="24.2" r="21.4" fill="url(#rim)"/>
<circle cx="23.4" cy="24.2" r="18.6" fill="#e9e9e6"/>
<circle cx="23.4" cy="24.2" r="16.8" fill="url(#cmp)" stroke="#6e879e" stroke-width=".7"/>
<circle cx="23.4" cy="24.2" r="13.4" fill="none" stroke="#9fd2f6" stroke-width=".5" opacity=".6"/>
<path d="M23.4 13.4 L25.2 22.4 L34.2 24.2 L25.2 26 L23.4 35 L21.6 26 L12.6 24.2 L21.6 22.4 Z" fill="#fff" opacity=".95"/>
<path d="M26.8 19.6 L28 21.2 L29.6 22 L28 22.8 Z M20 28.8 L18.8 27.2 L17.2 26.4 L18.8 25.6Z" fill="#fff" opacity=".7"/>
<path d="M35.6 12.4 L24.8 25.6 L22 22.8 Z" fill="#ee8a22"/><path d="M35.6 12.4 L23.4 24.2 L22 22.8 Z" fill="#f8c26a"/>
<path d="M11.2 36 L22 22.8 L24.8 25.6 Z" fill="#eef2f6"/><path d="M11.2 36 L23.4 24.2 L24.8 25.6 Z" fill="#c4ccd6"/>
<g fill="#d8ecfb" font-family="Liberation Sans" font-size="4.2" font-weight="bold" text-anchor="middle"><text x="23.4" y="12.2">N</text><text x="23.4" y="39.4">S</text><text x="9.8" y="25.8">W</text><text x="37" y="25.8">E</text></g>
</svg>
<svg class="abs" style="left:25px;top:95px" width="43" height="40" viewBox="0 0 43 40">
<g transform="rotate(8 24 16)"><rect x="8" y="3" width="32" height="26" rx="2" fill="#cfe2f4" stroke="#9ab8d6" stroke-width=".7"/><circle cx="15" cy="8" r="3" fill="#5a4030"/></g>
<path d="M2 9.5 A2 2 0 0 1 4 7.5 H36 A2 2 0 0 1 38 9.5 V33 A2 2 0 0 1 36 35 H31 A3.4 3.4 0 0 0 24.4 35 H15.6 A3.4 3.4 0 0 0 9 35 H4 A2 2 0 0 1 2 33 Z" fill="#fbf5da" stroke="#cbbd92" stroke-width=".8"/>
<rect x="5" y="10.5" width="12" height="17" fill="#fbf6e3" stroke="#d8c9a0" stroke-width=".5"/>
<circle cx="11" cy="16.5" r="3.6" fill="#f2c9a4"/><path d="M7 15.5 Q11 10 15 15.5 Q11 13.5 7 15.5Z" fill="#4a3020"/>
<path d="M5.5 27.5 Q11 18.5 16.5 27.5 Z" fill="#3f9be0"/>
<path d="M20 13 H34 M20 16.5 H34 M20 20 H34 M20 23.5 H30" stroke="#d2c6a2" stroke-width="1.1"/>
</svg>
<svg class="abs" style="left:102px;top:100px" width="49" height="42" viewBox="0 0 49 42">
<defs><linearGradient id="nb" x1="0" y1="0" x2="1" y2="1"><stop offset="0" stop-color="#f9d06c"/><stop offset=".45" stop-color="#f2aa3e"/><stop offset="1" stop-color="#d7741a"/></linearGradient></defs>
<rect x="5" y="2" width="42" height="37.5" rx="1.5" fill="url(#nb)" stroke="#b9681a" stroke-width=".8"/>
<path d="M30 2.5 L40 2.5 L31 39 L22 39 Z" fill="#fbe29a" opacity=".30"/><rect x="5.4" y="2.4" width="3.6" height="36.6" fill="#fbe6b4" opacity=".75"/>
<path d="M5.6 38.6 H46.6" stroke="#fbe7b4" stroke-width="1"/>
<g stroke="#d8d8d8" stroke-width="1.5" stroke-linecap="round"><path d="M1.2 8 H7.5"/><path d="M1.2 16.5 H7.5"/><path d="M1.2 25 H7.5"/><path d="M1.2 33.5 H7.5"/></g>
<g fill="#7a4410"><circle cx="8" cy="8" r="1.1"/><circle cx="8" cy="16.5" r="1.1"/><circle cx="8" cy="25" r="1.1"/><circle cx="8" cy="33.5" r="1.1"/></g>
</svg>
<svg class="abs" style="left:26px;top:169px" width="40" height="50" viewBox="0 0 40 50">
<defs><linearGradient id="cbd" x1="0" y1="0" x2="0" y2="1"><stop offset="0" stop-color="#e07a1a"/><stop offset="1" stop-color="#b84a0c"/></linearGradient></defs>
<rect x="2" y="6" width="36" height="42" rx="2.5" fill="url(#cbd)" stroke="#8a3606" stroke-width=".8"/>
<path d="M6.5 9 H33.5 V45 H28 L21 45 L6.5 45 Z" fill="#f8f8f8" stroke="#cfcfcf" stroke-width=".5"/>
<g stroke="#d5d5da" stroke-width=".7"><path d="M10 14 H31 M10 17.5 H31 M10 21 H31 M10 24.5 H31 M10 28 H31 M10 31.5 H31 M10 35 H26 M10 38.5 H22"/><path d="M14 12 V40 M18.5 12 V40 M23 12 V38 M27.5 12 V36"/></g>
<path d="M33.5 37 L25 45 L33.5 45 Z" fill="#b84a0c"/><path d="M33.5 37 Q27 37.5 26 38.5 Q25.5 41 25 45 Z" fill="#ececec" stroke="#c9c9c9" stroke-width=".5"/>
<path d="M12 10.5 V7.5 Q12 5.5 14.5 5.5 H17 Q17.5 2 20 2 Q22.5 2 23 5.5 H25.5 Q28 5.5 28 7.5 V10.5 Z" fill="#a9a9ad" stroke="#68686c" stroke-width=".7"/><circle cx="20" cy="4.6" r="1.2" fill="#4a4a4e"/>
</svg>
<svg class="abs" style="left:102.5px;top:177.5px" width="47" height="44" viewBox="0 0 47 44">
<defs><linearGradient id="shl" x1="0" y1="0" x2="0" y2="1"><stop offset="0" stop-color="#3a3a3a"/><stop offset="1" stop-color="#242424"/></linearGradient></defs>
<rect x=".5" y=".5" width="46" height="43" rx="3" fill="#e4e4e4" stroke="#a4a4a4" stroke-width=".8"/>
<rect x="4.5" y="4.5" width="38" height="35" rx="3.5" fill="url(#shl)" stroke="#1a1a1a" stroke-width=".6"/>
<path d="M9.5 9.5 L15.5 12.6 L9.5 15.7" fill="none" stroke="#fff" stroke-width="1.9"/><path d="M17.5 18 H24.5" stroke="#fff" stroke-width="1.9"/>
</svg>
<svg class="abs" style="left:34.5px;top:246px" width="25" height="46" viewBox="0 0 25 46">
<defs><linearGradient id="phb" x1="0" y1="0" x2="1" y2="0"><stop offset="0" stop-color="#7d7268"/><stop offset=".15" stop-color="#3a3632"/><stop offset=".85" stop-color="#2a2724"/><stop offset="1" stop-color="#6d635a"/></linearGradient></defs>
<rect x="1" y="1" width="23" height="44" rx="5" fill="url(#phb)" stroke="#8d8378" stroke-width=".7"/>
<rect x="3.2" y="5.5" width="18.6" height="29" fill="#2b2f36"/>
<rect x="3.2" y="5.5" width="18.6" height="2" fill="#c9cdd2"/><rect x="4" y="8.4" width="17" height="2.6" fill="#d4d4d4"/>
<g fill="#7f858e"><rect x="4.6" y="14" width="2.6" height="2.4"/><rect x="9" y="14" width="2.6" height="2.4"/><rect x="13.4" y="14" width="2.6" height="2.4"/><rect x="17.8" y="14" width="2.6" height="2.4"/><rect x="4.6" y="21" width="2.6" height="2.4"/><rect x="9" y="21" width="2.6" height="2.4"/><rect x="13.4" y="21" width="2.6" height="2.4"/><rect x="17.8" y="21" width="2.6" height="2.4"/></g>
<rect x="5" y="28" width="15" height="1.4" fill="#8b9098"/><circle cx="12.5" cy="39.5" r="1.6" fill="#55504a"/>
<path d="M4 43.5 Q12.5 46 21 43.5" stroke="#9a9087" stroke-width="1" fill="none"/>
</svg>
<div class="dlab" style="left:1.5px;top:66.6px;width:90px">File Manager</div>
<div class="dlab" style="left:80.7px;top:66.6px;width:90px">Device Info</div>
<div class="dlab" style="left:1.5px;top:143.2px;width:90px">Contacts</div>
<div class="dlab" style="left:81.0px;top:147.2px;width:90px">System Logs</div>
<div class="dlab" style="left:1.0px;top:220.4px;width:90px">Clipboard</div>
<div class="dlab" style="left:81.0px;top:225.7px;width:90px">Shell</div>
<div class="dlab" style="left:1.2px;top:297.8px;width:90px">Remote<br>Control</div><style>
#win{position:absolute;width:998px;height:523px;background:#cfdbec;border-radius:4px;box-shadow:inset 0 0 0 1px #e6edf7, 0 0 0 1px rgba(120,150,200,.5), 2px 3px 6px rgba(10,30,80,.3);font-size:11px}
#win .t{line-height:14px}
.ph{position:absolute;height:26px;background:linear-gradient(#dbe6f6 0%,#cfddf2 45%,#c3d4ee 50%,#cbdaf0 100%);border:1px solid #99bbe8;color:#15428b;font-weight:bold;font-size:11.5px}
.tr{position:absolute;left:0;width:182px;height:18px}
.tr .ar{position:absolute;left:38.8px;top:4px}
.tr .fo{position:absolute;left:50px;top:2.4px}
.tr .t{left:67px;top:2px;color:#222;font-size:10.7px}
.fi{position:absolute;width:90px;height:84px}
.fi .lb{position:absolute;left:-5px;width:100px;top:54px;text-align:center;font-size:10.6px;line-height:14px;color:#222;white-space:nowrap}
.th{position:absolute;left:21px;top:15px;width:47px;height:36px;background:#fff;border:1px solid #bcbcbc;padding:2px 2px}
.tbb{position:absolute;top:7px;font-size:11px;color:#333;line-height:14px;white-space:nowrap}
.tbs{position:absolute;top:5px;width:1px;height:17px;background:#a9c3e6;border-right:1px solid #f2f7fd;box-sizing:content-box}
.wbtn{position:absolute;top:6px;width:14px;height:13px;background:#f7fafd;border:1px solid #e9f0f9;border-radius:3px}
</style>
<div id="win" style="left:255px;top:21px">
<svg width="0" height="0" style="position:absolute"><defs>
<linearGradient id="sky" x1="0" y1="0" x2="0" y2="1"><stop offset="0" stop-color="#3570c4"/><stop offset=".7" stop-color="#7db0e6"/><stop offset="1" stop-color="#93bfea"/></linearGradient><linearGradient id="bfw" x1="0" y1="0" x2="0" y2="1"><stop offset="0" stop-color="#fdfdfe"/><stop offset="1" stop-color="#e4e6ea"/></linearGradient><radialGradient id="cxr" cx=".5" cy=".25" r=".7"><stop offset="0" stop-color="#2f5468"/><stop offset=".6" stop-color="#16262f"/><stop offset="1" stop-color="#070d11"/></radialGradient>
<linearGradient id="fold" x1="0" y1="0" x2="0" y2="1"><stop offset="0" stop-color="#fef2b0"/><stop offset="1" stop-color="#f4cf54"/></linearGradient>
<linearGradient id="pg" x1="0" y1="0" x2="0" y2="1"><stop offset="0" stop-color="#b4e0f4"/><stop offset=".5" stop-color="#a9c6f2"/><stop offset="1" stop-color="#b0a8ee"/></linearGradient>
<linearGradient id="cxg" x1="0" y1="0" x2="0" y2="1"><stop offset="0" stop-color="#263a48"/><stop offset=".6" stop-color="#15232e"/><stop offset="1" stop-color="#04080c"/></linearGradient>
<linearGradient id="bfl" x1="0" y1="0" x2=".25" y2="1"><stop offset="0" stop-color="#cfe4f7"/><stop offset=".5" stop-color="#93bde8"/><stop offset="1" stop-color="#4a87c8"/></linearGradient>
<symbol id="pic" viewBox="0 0 41 30"><rect width="41" height="30" fill="url(#sky)"/><path d="M0 22.8 L4 22 L7.5 20.6 L10.5 17.4 L12.6 14 L14.4 12.4 L16.3 11.8 L18 12.6 L19.4 14.6 L20.8 17.6 L22.5 19 L25 19.6 L28 18.8 L31 17.6 L34.5 16.4 L38 15.6 L41 14.8 V27 H0 Z" fill="#85767c"/><path d="M16.3 11.8 L18 12.6 L19.4 14.6 L20.8 17.6 L22.5 19 L22 22 L15 22 L15.5 16 Z" fill="#5f5258"/><path d="M22 19.2 L25 19.6 L28 18.8 L31 17.6 L34.5 16.4 L38 15.6 L41 14.8 V25 H20 Z" fill="#5a4a4c"/><path d="M28 20.5 L33 18.6 L38 17.6 L41 17 V24 H27 Z" fill="#7a5a52" opacity=".7"/><path d="M0 23 L6 22 L14 22.6 L24 22.4 L41 22.8 V27 H0 Z" fill="#3a403e"/><path d="M3 24.2 H30" stroke="#c8ccc8" stroke-width=".7" stroke-dasharray="1.6 2.4" opacity=".8"/><path d="M0 26 H41 V30 H0 Z" fill="#4a8a26"/><path d="M0 26 H41 V27.2 H0 Z" fill="#3a6a22"/></symbol>
<symbol id="fld" viewBox="0 0 16 14"><path d="M.6 2.2 A1 1 0 0 1 1.6 1.2 H5.6 L7 2.8 H14.4 A1 1 0 0 1 15.4 3.8 V12.4 A1 1 0 0 1 14.4 13.4 H1.6 A1 1 0 0 1 .6 12.4 Z" fill="url(#fold)" stroke="#c79a1c" stroke-width=".9"/><path d="M1.4 4.6 H14.6" stroke="#fff6c8" stroke-width=".8"/></symbol>
<symbol id="arr" viewBox="0 0 7 10"><path d="M1 .9 L5.8 5 L1 9.1 Z" fill="#fff" stroke="#8a8a8a" stroke-width="1"/></symbol>
<symbol id="txt" viewBox="0 0 33 42"><path d="M7 .5 H32.5 V41.5 H.5 V7 Z" fill="url(#pg)" stroke="#9fb6e6" stroke-width=".6"/><path d="M.5 7 L7 .5 V7 Z" fill="#e6f3fb" stroke="#9fb6e6" stroke-width=".5"/><g stroke="#6f86b8" stroke-width=".8" opacity=".75"><path d="M5 10.5H28M5 13.5H28M5 16.5H28M5 19.5H28M5 22.5H28M5 25.5H28M5 28.5H28M5 31.5H28M5 34.5H28"/></g></symbol>
<symbol id="cx" viewBox="0 0 48 48"><rect x=".4" y=".4" width="47.2" height="47.2" rx="3.6" fill="url(#cxr)" stroke="#05090d" stroke-width=".8"/><g fill="none" stroke="#35b4f0" stroke-linecap="round"><path d="M16.4 11.4 A10.6 10.6 0 0 1 31.8 11.4" stroke-width="2.1"/><path d="M19.6 14.6 A6.2 6.2 0 0 1 28.6 14.6" stroke-width="2"/></g><circle cx="24.1" cy="17.4" r="1.5" fill="#35b4f0"/><text x="5.2" y="37.8" font-family="Liberation Sans" font-size="19" fill="#35b4f0" stroke="#35b4f0" stroke-width=".5" textLength="10.5" lengthAdjust="spacingAndGlyphs">3</text><path d="M26.2 27.2 A6.3 6.3 0 1 0 26.2 34.6" fill="none" stroke="#fff" stroke-width="1.7"/><path d="M25.4 28.9 L27.6 30.9 L25.4 32.9Z" fill="#35b4f0"/><path d="M28.6 24.4 L41 37.6 M41 24.4 L28.6 37.6" stroke="#fff" stroke-width="2.2"/></symbol>
<symbol id="bfo" viewBox="0 0 42 48"><path d="M1 42 L10 29 L11 46 L5 45.5 Z" fill="#000" opacity=".07"/><path d="M3.5 41 L10 32 L11 45.5 L7 45 Z" fill="#000" opacity=".07"/><path d="M11.4 6 Q11.4 3.3 14 3.2 H30 V45.6 H10 Q9.2 45.6 9.3 44.6 L11.4 30 Z" fill="url(#bfw)" stroke="#d6d8dc" stroke-width=".6"/><path d="M9.2 31.2 Q9.2 29.4 11 29.4 H30 V45.6 H9.8 Q9.2 45.6 9.2 45 Z" fill="#eff0f3" stroke="#d2d4d9" stroke-width=".5"/><path d="M29.5 7.3 L41 3.2 V39.9 L29.5 47.3 Z" fill="url(#bfl)" stroke="#85aedc" stroke-width=".5"/><path d="M30.3 8.4 L33 7.4 V44 L30.3 45.8 Z" fill="#fff" opacity=".28"/></symbol>
</defs></svg>
<svg class="abs" style="left:8px;top:7px" width="14" height="10" viewBox="0 0 14 10"><path d="M.5 1.5 H5 L6 .5 H13.5 V9.5 H.5 Z" fill="url(#bfl)" stroke="#6c95c4" stroke-width=".6"/><path d="M1 3 H13" stroke="#eaf3fc" stroke-width=".8"/></svg>
<div class="t" style="left:26px;top:5px;font-weight:bold;font-size:12px;color:#15428b;letter-spacing:-.1px">File Manager</div>
<div class="wbtn" style="left:943.5px"><div class="abs" style="left:3px;top:7px;width:6px;height:2px;background:#2c5aa8"></div></div>
<div class="wbtn" style="left:960.5px"><div class="abs" style="left:2px;top:2px;width:8px;height:7px;border:1px solid #2c5aa8;border-top-width:2px"></div></div>
<div class="wbtn" style="left:977.5px"><svg class="abs" style="left:2px;top:1.5px" width="8" height="8" viewBox="0 0 8 8"><path d="M.8 .8 L7.2 7.2 M7.2 .8 L.8 7.2" stroke="#2c5aa8" stroke-width="1.5"/></svg></div>
<div class="abs" style="left:6px;top:25px;width:201px;height:492px;border:1px solid #99bbe8;background:#fff;overflow:hidden">
<div class="abs" style="left:0;top:0;width:182px;height:463px;overflow:hidden">
<div class="tr" style="top:0px"><svg class="ar" width="7" height="10"><use href="#arr"/></svg><svg class="fo" width="14.4" height="12.4"><use href="#fld"/></svg><div class="t">.thumbnails</div></div>
<div class="tr" style="top:18px"><svg class="ar" width="7" height="10"><use href="#arr"/></svg><svg class="fo" width="14.4" height="12.4"><use href="#fld"/></svg><div class="t">3CXPhone</div></div>
<div class="tr" style="top:36px"><svg class="ar" width="7" height="10"><use href="#arr"/></svg><svg class="fo" width="14.4" height="12.4"><use href="#fld"/></svg><div class="t">3CXPhone12</div></div>
<div class="tr" style="top:54px"><svg class="ar" width="7" height="10"><use href="#arr"/></svg><svg class="fo" width="14.4" height="12.4"><use href="#fld"/></svg><div class="t">3DMark</div></div>
<div class="tr" style="top:72px"><svg class="ar" width="7" height="10"><use href="#arr"/></svg><svg class="fo" width="14.4" height="12.4"><use href="#fld"/></svg><div class="t">Alarms</div></div>
<div class="tr" style="top:90px"><svg class="ar" width="7" height="10"><use href="#arr"/></svg><svg class="fo" width="14.4" height="12.4"><use href="#fld"/></svg><div class="t">AllsharePlayLog</div></div>
<div class="tr" style="top:108px"><svg class="ar" width="7" height="10"><use href="#arr"/></svg><svg class="fo" width="14.4" height="12.4"><use href="#fld"/></svg><div class="t">Android</div></div>
<div class="tr" style="top:126px"><svg class="ar" width="7" height="10"><use href="#arr"/></svg><svg class="fo" width="14.4" height="12.4"><use href="#fld"/></svg><div class="t">AndroidDesktop</div></div>
<div class="tr" style="top:144px"><svg class="ar" width="7" height="10"><use href="#arr"/></svg><svg class="fo" width="14.4" height="12.4"><use href="#fld"/></svg><div class="t">Application</div></div>
<div class="tr" style="top:162px"><svg class="ar" width="7" height="10"><use href="#arr"/></svg><svg class="fo" width="14.4" height="12.4"><use href="#fld"/></svg><div class="t">binarytoys</div></div>
<div class="tr" style="top:180px"><svg class="ar" width="7" height="10"><use href="#arr"/></svg><svg class="fo" width="14.4" height="12.4"><use href="#fld"/></svg><div class="t">Bluetooth</div></div>
<div class="tr" style="top:198px"><svg class="ar" width="7" height="10"><use href="#arr"/></svg><svg class="fo" width="14.4" height="12.4"><use href="#fld"/></svg><div class="t">DCIM</div></div>
<div class="tr" style="top:216px;background:#d9e5f7"><svg class="ar" width="7" height="10"><use href="#arr"/></svg><svg class="fo" width="14.4" height="12.4"><use href="#fld"/></svg><div class="t">Download</div></div>
<div class="tr" style="top:234px"><svg class="ar" width="7" height="10"><use href="#arr"/></svg><svg class="fo" width="14.4" height="12.4"><use href="#fld"/></svg><div class="t">files</div></div>
<div class="tr" style="top:252px"><svg class="ar" width="7" height="10"><use href="#arr"/></svg><svg class="fo" width="14.4" height="12.4"><use href="#fld"/></svg><div class="t">media</div></div>
<div class="tr" style="top:270px"><svg class="ar" width="7" height="10"><use href="#arr"/></svg><svg class="fo" width="14.4" height="12.4"><use href="#fld"/></svg><div class="t">Movies</div></div>
<div class="tr" style="top:288px"><svg class="ar" width="7" height="10"><use href="#arr"/></svg><svg class="fo" width="14.4" height="12.4"><use href="#fld"/></svg><div class="t">Music</div></div>
<div class="tr" style="top:306px"><svg class="ar" width="7" height="10"><use href="#arr"/></svg><svg class="fo" width="14.4" height="12.4"><use href="#fld"/></svg><div class="t">Notifications</div></div>
<div class="tr" style="top:324px"><svg class="ar" width="7" height="10"><use href="#arr"/></svg><svg class="fo" width="14.4" height="12.4"><use href="#fld"/></svg><div class="t">Pictures</div></div>
<div class="tr" style="top:342px"><svg class="ar" width="7" height="10"><use href="#arr"/></svg><svg class="fo" width="14.4" height="12.4"><use href="#fld"/></svg><div class="t">Playlists</div></div>
<div class="tr" style="top:360px"><svg class="ar" width="7" height="10"><use href="#arr"/></svg><svg class="fo" width="14.4" height="12.4"><use href="#fld"/></svg><div class="t">Podcasts</div></div>
<div class="tr" style="top:378px"><svg class="ar" width="7" height="10"><use href="#arr"/></svg><svg class="fo" width="14.4" height="12.4"><use href="#fld"/></svg><div class="t">Ringtones</div></div>
<div class="tr" style="top:396px"><svg class="ar" width="7" height="10"><use href="#arr"/></svg><svg class="fo" width="14.4" height="12.4"><use href="#fld"/></svg><div class="t">Samsung</div></div>
<div class="tr" style="top:414px"><svg class="ar" width="7" height="10"><use href="#arr"/></svg><svg class="fo" width="14.4" height="12.4"><use href="#fld"/></svg><div class="t">samsungapps</div></div>
<div class="tr" style="top:432px"><svg class="ar" width="7" height="10"><use href="#arr"/></svg><svg class="fo" width="14.4" height="12.4"><use href="#fld"/></svg><div class="t">Sounds</div></div>
<div class="tr" style="top:450px"><svg class="ar" width="7" height="10"><use href="#arr"/></svg><svg class="fo" width="14.4" height="12.4"><use href="#fld"/></svg><div class="t">Svoic</div></div>
</div>
<div class="abs" style="left:183px;top:0;width:16px;height:463px;background:#f1f1f1"></div>
<div class="abs" style="left:183px;top:168px;width:15.2px;height:202px;background:#c9c9c9"></div>
<svg class="abs" style="left:186px;top:7px" width="10" height="6" viewBox="0 0 10 6"><path d="M1 5.2 L5 1.2 L9 5.2" fill="none" stroke="#444" stroke-width="1.7"/></svg>
<svg class="abs" style="left:186px;top:452px" width="10" height="6" viewBox="0 0 10 6"><path d="M1 .8 L5 4.8 L9 .8" fill="none" stroke="#444" stroke-width="1.7"/></svg>
<div class="abs" style="left:0;top:463px;width:199px;height:27px;background:linear-gradient(#dfe9f7,#cfdcf0);border-top:1px solid #99bbe8"><div class="tbb" style="left:5.699999999999989px;top:6px">Refresh</div><div class="tbs" style="left:51.5px;top:4px"></div><div class="tbb" style="left:59.200000000000045px;top:6px">Collapse all</div></div>
</div>
<div class="ph" style="left:212px;top:25px;width:619px"><div class="t" style="left:6px;top:5px;font-size:11.5px;letter-spacing:.42px">/sdcard/Download</div></div>
<div class="abs" style="left:212px;top:50px;width:619px;height:28px;background:linear-gradient(#dde8f7,#cddbf0);border:1px solid #99bbe8;border-top:none">
<div class="tbb" style="left:5px">Download</div>
<div class="tbb" style="left:68.5px">Upload</div>
<div class="tbb" style="left:115px">Delete</div>
<div class="tbb" style="left:159px">Copy</div>
<div class="tbb" style="left:198px">Move</div>
<div class="tbb" style="left:238px">Create Folder</div>
<div class="tbb" style="left:317px">Preview</div>
<div class="tbb" style="left:371px">Edit As Text</div>
<div class="tbb" style="left:443.5px">View Mode<span style="display:inline-block;margin-left:2px;margin-bottom:1px;width:0;height:0;border:3px solid transparent;border-top:4px solid #222;border-bottom:0;vertical-align:middle"></span></div>
<div class="tbb" style="left:522.2px">Sort<span style="display:inline-block;margin-left:2px;margin-bottom:1px;width:0;height:0;border:3px solid transparent;border-top:4px solid #222;border-bottom:0;vertical-align:middle"></span></div>
<div class="tbs" style="left:61px"></div>
<div class="tbs" style="left:108px"></div>
<div class="tbs" style="left:152px"></div>
<div class="tbs" style="left:191px"></div>
<div class="tbs" style="left:230.5px"></div>
<div class="tbs" style="left:310px"></div>
<div class="tbs" style="left:364px"></div>
<div class="tbs" style="left:436.5px"></div>
<div class="tbs" style="left:514.8px"></div>
</div>
<div class="abs" style="left:212px;top:78px;width:619px;height:419px;background:#fff;border-left:1px solid #99bbe8;border-right:1px solid #99bbe8;overflow:hidden">
<div class="fi" style="left:5px;top:6px">
<svg class="abs" style="left:25px;top:7px" width="42" height="48"><use href="#bfo"/></svg>
<div class="lb" style="left:-5px;top:65.3px">..</div></div>
<div class="fi" style="left:95px;top:6px">
<svg class="abs" style="left:25px;top:7px" width="42" height="48"><use href="#bfo"/></svg>
<div class="lb" style="left:-5px;top:65.3px">.magnet_tmp_dir</div></div>
<div class="fi" style="left:185px;top:6px">
<div class="th" style="left:21px;top:15px"><svg width="41" height="30" style="display:block"><use href="#pic"/></svg></div>
<div class="lb" style="left:-5px;top:65.3px">1 (3).jpg</div></div>
<div class="fi" style="left:275px;top:6px">
<div class="th" style="left:21px;top:15px"><svg width="41" height="30" style="display:block"><use href="#pic"/></svg></div>
<div class="lb" style="left:-5px;top:65.3px">10 (2).jpg</div></div>
<div class="fi" style="left:365px;top:6px">
<div class="th" style="left:21px;top:15px"><svg width="41" height="30" style="display:block"><use href="#pic"/></svg></div>
<div class="lb" style="left:-5px;top:65.3px">11 (2).jpg</div></div>
<div class="fi" style="left:455px;top:6px">
<div class="th" style="left:21px;top:15px"><svg width="41" height="30" style="display:block"><use href="#pic"/></svg></div>
<div class="lb" style="left:-5px;top:65.3px">12 (2).jpg</div></div>
<div class="fi" style="left:5px;top:91px">
<div class="th" style="left:21px;top:15px"><svg width="41" height="30" style="display:block"><use href="#pic"/></svg></div>
<div class="lb" style="left:-5px;top:65.3px">15.jpg</div></div>
<div class="fi" style="left:95px;top:91px">
<div class="th" style="left:21px;top:15px"><svg width="41" height="30" style="display:block"><use href="#pic"/></svg></div>
<div class="lb" style="left:-5px;top:65.3px">18 (2).jpg</div></div>
<div class="fi" style="left:185px;top:91px;background:#eaf0fa;border:1px solid #a8c6ee;border-radius:2px">
<div class="th" style="left:20px;top:14px"><svg width="41" height="30" style="display:block"><use href="#pic"/></svg></div>
<div class="lb" style="left:-6px;top:64.3px">18.jpg</div></div>
<div class="fi" style="left:275px;top:91px">
<div class="th" style="left:21px;top:15px"><svg width="41" height="30" style="display:block"><use href="#pic"/></svg></div>
<div class="lb" style="left:-5px;top:65.3px">19 (2).jpg</div></div>
<div class="fi" style="left:365px;top:91px">
<div class="th" style="left:21px;top:15px"><svg width="41" height="30" style="display:block"><use href="#pic"/></svg></div>
<div class="lb" style="left:-5px;top:65.3px">19.jpg</div></div>
<div class="fi" style="left:455px;top:91px">
<div class="th" style="left:21px;top:15px"><svg width="41" height="30" style="display:block"><use href="#pic"/></svg></div>
<div class="lb" style="left:-5px;top:65.3px">2 (2).jpg</div></div>
<div class="fi" style="left:5px;top:176px">
<div class="th" style="left:21px;top:15px"><svg width="41" height="30" style="display:block"><use href="#pic"/></svg></div>
<div class="lb" style="left:-5px;top:65.3px">2.jpg</div></div>
<div class="fi" style="left:95px;top:176px">
<div class="th" style="left:21px;top:15px"><svg width="41" height="30" style="display:block"><use href="#pic"/></svg></div>
<div class="lb" style="left:-5px;top:65.3px">20.jpg</div></div>
<div class="fi" style="left:185px;top:176px">
<div class="th" style="left:21px;top:15px"><svg width="41" height="30" style="display:block"><use href="#pic"/></svg></div>
<div class="lb" style="left:-5px;top:65.3px">21.jpg</div></div>
<div class="fi" style="left:275px;top:176px">
<div class="th" style="left:21px;top:15px"><svg width="41" height="30" style="display:block"><use href="#pic"/></svg></div>
<div class="lb" style="left:-5px;top:65.3px">22.jpg</div></div>
<div class="fi" style="left:365px;top:176px">
<div class="th" style="left:21px;top:15px"><svg width="41" height="30" style="display:block"><use href="#pic"/></svg></div>
<div class="lb" style="left:-5px;top:65.3px">26.jpg</div></div>
<div class="fi" style="left:455px;top:176px">
<div class="th" style="left:21px;top:15px"><svg width="41" height="30" style="display:block"><use href="#pic"/></svg></div>
<div class="lb" style="left:-5px;top:65.3px">32.jpg</div></div>
<div class="fi" style="left:5px;top:261px">
<div class="th" style="left:21px;top:15px"><svg width="41" height="30" style="display:block"><use href="#pic"/></svg></div>
<div class="lb" style="left:-5px;top:65.3px">34403d27a431...</div></div>
<div class="fi" style="left:95px;top:261px">
<svg class="abs" style="left:21px;top:9px" width="48" height="48"><use href="#cx"/></svg>
<div class="lb" style="left:-5px;top:65.3px">3CXPhone12.0...</div></div>
<div class="fi" style="left:185px;top:261px">
<svg class="abs" style="left:21px;top:9px" width="48" height="48"><use href="#cx"/></svg>
<div class="lb" style="left:-5px;top:65.3px">3CXPhone12.0...</div></div>
<div class="fi" style="left:275px;top:261px">
<svg class="abs" style="left:21px;top:9px" width="48" height="48"><use href="#cx"/></svg>
<div class="lb" style="left:-5px;top:65.3px">3CXPhone12.0...</div></div>
<div class="fi" style="left:365px;top:261px">
<svg class="abs" style="left:21px;top:9px" width="48" height="48"><use href="#cx"/></svg>
<div class="lb" style="left:-5px;top:65.3px">3CXPhone12.0...</div></div>
<div class="fi" style="left:455px;top:261px">
<svg class="abs" style="left:27px;top:12px" width="33" height="42"><use href="#txt"/></svg>
<div class="lb" style="left:-5px;top:65.3px">3cxProv_1304...</div></div>
<div class="fi" style="left:5px;top:346px">
<div class="th" style="left:21px;top:15px"><svg width="41" height="30" style="display:block"><use href="#pic"/></svg></div>
<div class="lb" style="left:-5px;top:65.3px">3D_blue_eyeb...</div></div>
<div class="fi" style="left:95px;top:346px">
<div class="th" style="left:21px;top:15px"><svg width="41" height="30" style="display:block"><use href="#pic"/></svg></div>
<div class="lb" style="left:-5px;top:65.3px">3D_blue_fluo...</div></div>
<div class="fi" style="left:185px;top:346px">
<div class="th" style="left:21px;top:15px"><svg width="41" height="30" style="display:block"><use href="#pic"/></svg></div>
<div class="lb" style="left:-5px;top:65.3px">3D_blue_fluo...</div></div>
<div class="fi" style="left:275px;top:346px">
<div class="th" style="left:21px;top:15px"><svg width="41" height="30" style="display:block"><use href="#pic"/></svg></div>
<div class="lb" style="left:-5px;top:65.3px">3D_water_dro...</div></div>
<div class="fi" style="left:365px;top:346px">
<div class="th" style="left:21px;top:15px"><svg width="41" height="30" style="display:block"><use href="#pic"/></svg></div>
<div class="lb" style="left:-5px;top:65.3px">4 (2).jpg</div></div>
<div class="fi" style="left:455px;top:346px">
<div class="th" style="left:21px;top:15px"><svg width="41" height="30" style="display:block"><use href="#pic"/></svg></div>
<div class="lb" style="left:-5px;top:65.3px">4c300e958166...</div></div>
<div class="abs" style="left:601px;top:0;width:17px;height:419px;background:#f1f1f1"></div>
<div class="abs" style="left:601px;top:17.399999999999977px;width:15.6px;height:110px;background:#c9c9c9"></div>
<svg class="abs" style="left:604.5px;top:6px" width="10" height="6" viewBox="0 0 10 6"><path d="M1 5.2 L5 1.2 L9 5.2" fill="none" stroke="#444" stroke-width="1.7"/></svg>
<svg class="abs" style="left:604.5px;top:407px" width="10" height="6" viewBox="0 0 10 6"><path d="M1 .8 L5 4.8 L9 .8" fill="none" stroke="#444" stroke-width="1.7"/></svg>
</div>
<div class="abs" style="left:212px;top:497px;width:619px;height:20px;background:linear-gradient(#e3ecf8,#d6e2f3);border:1px solid #99bbe8"><div class="t" style="left:2.5px;top:2.2px;color:#222;font-size:10.9px">To upload files drag them and drop in the current folder (HTML 5 Browsers).</div></div>
<div class="ph" style="left:831px;top:25px;width:160px"><div class="t" style="left:5.5px;top:5px;font-size:11.5px;letter-spacing:.28px">1 file selected</div><div class="abs" style="left:141px;top:6px;width:14px;height:14px;background:#f4f8fd;border:1px solid #bcd0ec;border-radius:2px"><svg class="abs" style="left:2px;top:3px" width="9" height="7" viewBox="0 0 9 7"><path d="M.8 .6 L3.8 3.5 L.8 6.4 M4.8 .6 L7.8 3.5 L4.8 6.4" fill="none" stroke="#3a66ae" stroke-width="1.2"/></svg></div></div>
<div class="abs" style="left:831px;top:50px;width:160px;height:467px;background:#fff;border:1px solid #99bbe8;border-top:none">
<svg class="abs" style="left:60.5px;top:13px" width="33" height="42"><use href="#txt"/></svg>
<div class="t" style="left:0;width:158px;text-align:center;top:71.5px;font-size:10.8px;color:#222;letter-spacing:-.15px">Total size:</div>
<div class="t" style="left:0;width:158px;text-align:center;top:84.2px;font-size:10.8px;color:#222;letter-spacing:-.15px">988.4 KB</div>
<div class="t" style="left:0;width:158px;text-align:center;top:109.9px;font-size:10.8px;color:#222;letter-spacing:-.15px">Last Modified:</div>
<div class="t" style="left:0;width:158px;text-align:center;top:122.7px;font-size:10.8px;color:#222;letter-spacing:-.15px">23/03/13 12:30 pm</div>
<div class="t" style="left:10.799999999999955px;top:146.4px;font-size:10.8px;color:#222;letter-spacing:-.15px">18.jpg</div>
</div>
</div></div>
<div id="task"><div class="abs" style="left:0;top:0;width:1375px;height:1px;background:#34404e"></div><div class="abs" style="left:0;top:1px;width:1375px;height:1px;background:#a6a6a6"></div>
<div class="abs" style="left:0.4px;top:.4px;width:71.4px;height:29.4px;border-radius:15px;background:linear-gradient(#ffffff 0%,#f2f7fc 30%,#d5e5f6 48%,#a9c9ec 52%,#b7d3f0 75%,#e2eefa 100%);box-shadow:inset 0 0 0 1px rgba(120,150,190,.55)"></div>
<svg class="abs" style="left:9.6px;top:3.4px" width="22" height="23" viewBox="0 0 22 23"><path d="M6.6 6.2 A8.6 8.6 0 1 0 15.4 6.2" fill="none" stroke="#1d2430" stroke-width="2.7"/><path d="M11 .8 V11" stroke="#1d2430" stroke-width="2.7"/></svg>
<div class="t" style="left:38px;top:7.5px;font-size:11px;font-weight:bold;color:#17253f;letter-spacing:-.2px">Start</div>
<div class="abs" style="left:83.5px;top:5px;width:0;height:22px;border-left:1px dotted #777"></div>
<div class="abs" style="left:94.2px;top:1.6px;width:166.6px;height:27px;border-radius:4px;border:1px solid #6a6a6a;background:linear-gradient(#38383a 0%,#1a1a1c 45%,#000 50%,#0a0a0c 100%)"></div>
<svg class="abs" style="left:99.6px;top:9.6px" width="14" height="9.6" viewBox="0 0 14 11" preserveAspectRatio="none"><defs><linearGradient id="tf" x1="0" y1="0" x2="0" y2="1"><stop offset="0" stop-color="#dbe9f8"/><stop offset="1" stop-color="#6f9fd4"/></linearGradient></defs><path d="M.5 2 H5 L6 .8 H13.5 V10.5 H.5 Z" fill="url(#tf)" stroke="#4f7fb4" stroke-width=".5"/></svg>
<div class="t" style="left:118.2px;top:7.7px;font-size:11px;color:#fff;letter-spacing:-.28px;text-shadow:0 0 .6px #fff">File Manager</div>
<div class="t" style="left:1067.5px;top:2px;font-size:20px;line-height:26px;font-weight:bold;color:#fff;transform-origin:0 78%;transform:scale(.775,1.13);letter-spacing:-.3px;-webkit-text-stroke:1.15px #fff">www.mobiledevicemanager.com</div>
<svg class="abs" style="left:1312px;top:7.5px" width="28" height="17" viewBox="0 0 28 17"><defs><linearGradient id="bat" x1="0" y1="0" x2="0" y2="1"><stop offset="0" stop-color="#a6d94c"/><stop offset=".5" stop-color="#7cbf2a"/><stop offset="1" stop-color="#5c9c18"/></linearGradient></defs><rect x="1.2" y="1.2" width="23.2" height="14.6" rx="3" fill="#f6f6f0" stroke="#fff" stroke-width=".8"/><rect x="2.6" y="2.6" width="20.4" height="11.8" rx="1.8" fill="#23281c"/><rect x="2.6" y="2.6" width="16.6" height="11.8" rx="1.8" fill="url(#bat)"/><rect x="24.6" y="4.6" width="2.4" height="7.8" rx="1" fill="#fff"/></svg></div>
</div>
</body>
</html>
